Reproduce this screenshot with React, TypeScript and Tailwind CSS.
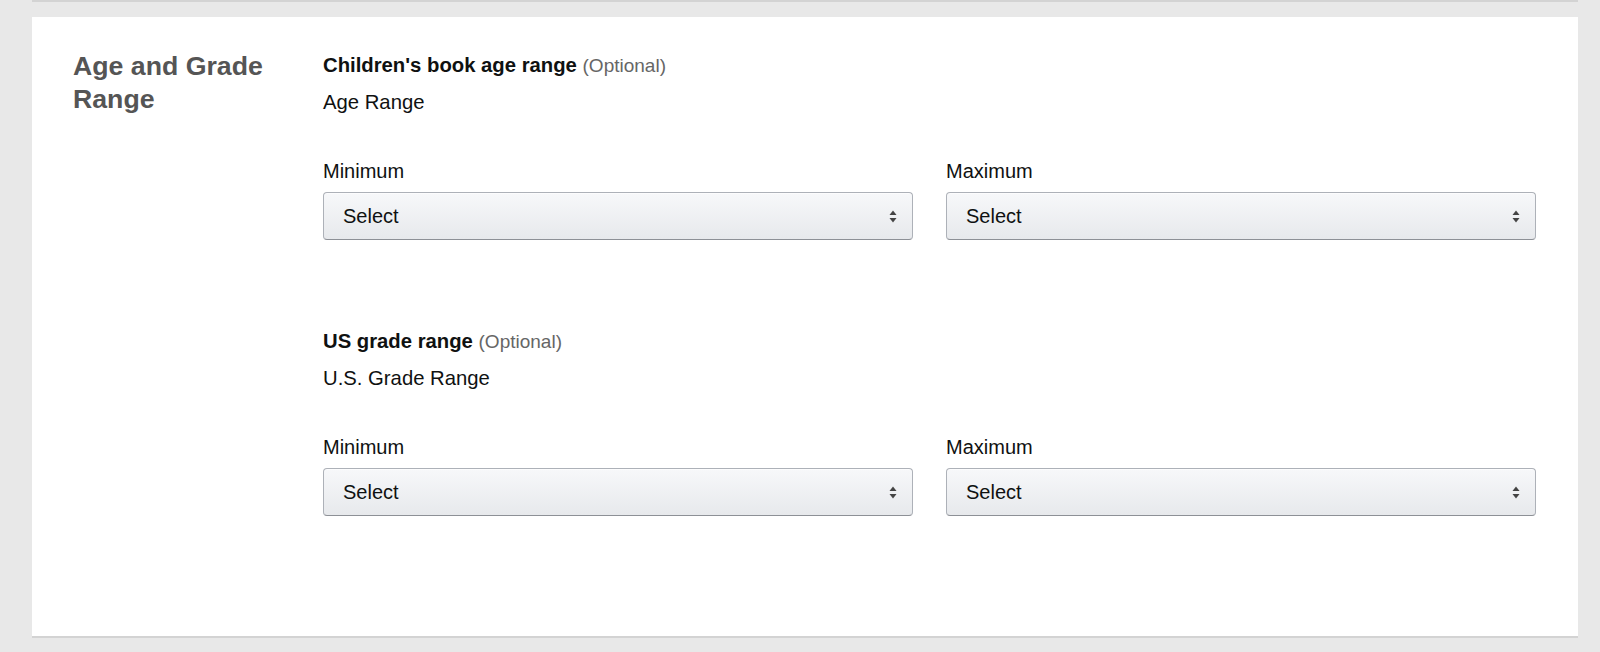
function SelectBox() {
  return (
    <div className="flex h-[48px] items-center justify-between rounded-[4px] border border-[#adb1b8] border-b-[#8d9096] bg-gradient-to-b from-[#f7f8fa] to-[#e7e9ec] pl-[19px] pr-[15px] text-[20px] text-[#0f1111] shadow-[inset_0_1px_0_rgba(255,255,255,0.6)]">
      <span>Select</span>
      <svg width="8" height="13" viewBox="0 0 8 13" className="text-[#444]">
        <path d="M4 0.5 L7.5 5 H0.5 Z" fill="currentColor" />
        <path d="M4 12.5 L7.5 8 H0.5 Z" fill="currentColor" />
      </svg>
    </div>
  );
}

function RangeSection({ title, sub }: { title: string; sub: string }) {
  return (
    <div>
      <div className="h-[28px] text-[20.3px] leading-[28px] text-[#0f1111]">
        <span className="font-bold">{title}</span>{" "}
        <span className="text-[19px] leading-[28px] text-[#666]">(Optional)</span>
      </div>
      <div className="mt-[9px] text-[20.3px] leading-[28px] text-[#0f1111]">{sub}</div>
      <div className="mt-[41px] grid grid-cols-2 gap-x-[33px]">
        <div>
          <div className="text-[20px] leading-[28px] text-[#0f1111]">Minimum</div>
          <div className="mt-[7px]">
            <SelectBox />
          </div>
        </div>
        <div>
          <div className="text-[20px] leading-[28px] text-[#0f1111]">Maximum</div>
          <div className="mt-[7px]">
            <SelectBox />
          </div>
        </div>
      </div>
    </div>
  );
}

export default function App() {
  return (
    <div className="min-h-[652px] bg-[#e8e8e8] font-['Liberation_Sans',Arial,sans-serif]">
      <div className="ml-[32px] mr-[22px] h-[2px] bg-[#d3d3d3]" />
      <div className="ml-[32px] mr-[22px] mt-[15px] flex border-b-2 border-[#d3d3d3] bg-white pb-[120px] pl-[41px] pr-[42px] pt-[34px]">
        <div className="w-[250px] shrink-0">
          <h2 className="-mt-[1px] text-[26.7px] font-bold leading-[33px] text-[#555]">
            Age and Grade
            <br />
            Range
          </h2>
        </div>
        <div className="flex flex-1 flex-col gap-[87px]">
          <RangeSection title="Children's book age range" sub="Age Range" />
          <RangeSection title="US grade range" sub="U.S. Grade Range" />
        </div>
      </div>
    </div>
  );
}
